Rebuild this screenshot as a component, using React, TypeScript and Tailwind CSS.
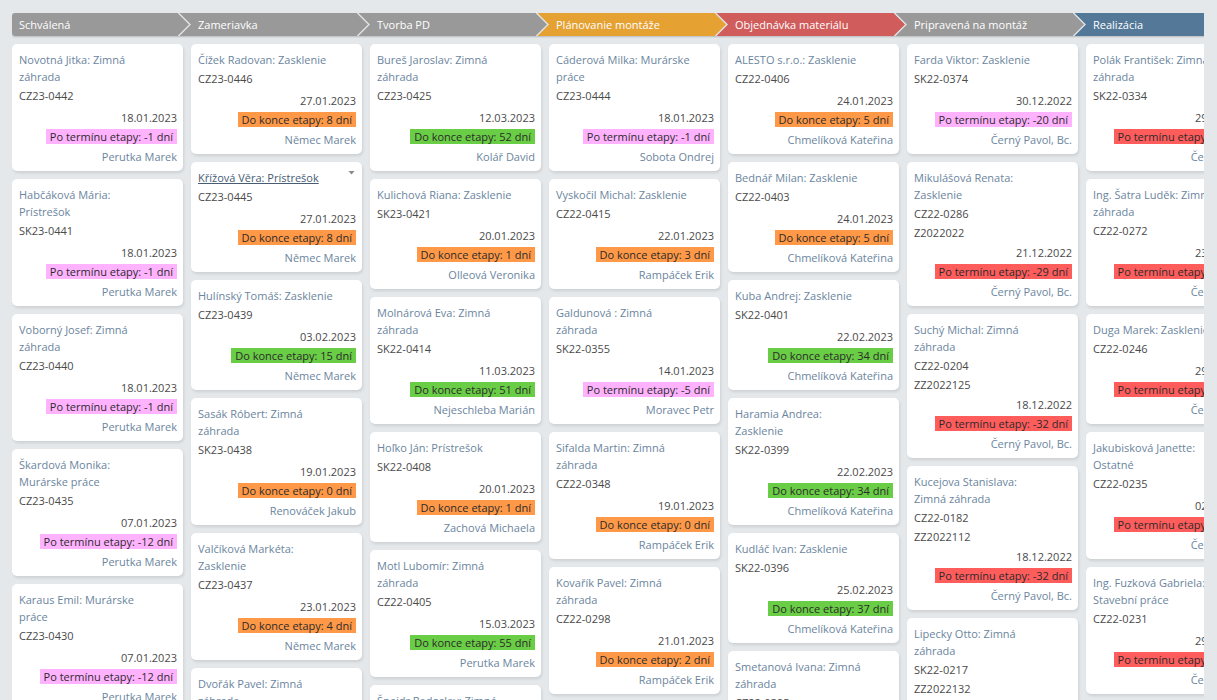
type Tone = "pink" | "orange" | "green" | "red";

interface Task {
  title: string;
  codes: string[];
  date: string;
  status: string;
  tone: Tone;
  owner: string;
  active?: boolean;
}

interface Stage {
  name: string;
  bg: string;
  fill: string;
  tasks: Task[];
}

const toneClass: Record<Tone, string> = {
  pink: "bg-[#ffb3ff]",
  orange: "bg-[#ff9947]",
  green: "bg-[#69cd45]",
  red: "bg-[#ff5c5c]",
};

const left = (days: number) => `Do konce etapy: ${days} dní`;
const late = (days: number) => `Po termínu etapy: -${days} dní`;

function task(title: string, code: string, date: string, status: string, tone: Tone, owner: string, active = false): Task {
  return { title, codes: code.split(" "), date, status, tone, owner, active };
}

const GREY = { bg: "bg-[#999999]", fill: "fill-[#999999]" };

const stages: Stage[] = [
  {
    name: "Schválená",
    ...GREY,
    tasks: [
      task("Novotná Jitka: Zimná záhrada", "CZ23-0442", "18.01.2023", late(1), "pink", "Perutka Marek"),
      task("Habčáková Mária: Prístrešok", "SK23-0441", "18.01.2023", late(1), "pink", "Perutka Marek"),
      task("Voborný Josef: Zimná záhrada", "CZ23-0440", "18.01.2023", late(1), "pink", "Perutka Marek"),
      task("Škardová Monika: Murárske práce", "CZ23-0435", "07.01.2023", late(12), "pink", "Perutka Marek"),
      task("Karaus Emil: Murárske práce", "CZ23-0430", "07.01.2023", late(12), "pink", "Perutka Marek"),
    ],
  },
  {
    name: "Zameriavka",
    ...GREY,
    tasks: [
      task("Čížek Radovan: Zasklenie", "CZ23-0446", "27.01.2023", left(8), "orange", "Němec Marek"),
      task("Křížová Věra: Prístrešok", "CZ23-0445", "27.01.2023", left(8), "orange", "Němec Marek", true),
      task("Hulínský Tomáš: Zasklenie", "CZ23-0439", "03.02.2023", left(15), "green", "Němec Marek"),
      task("Sasák Róbert: Zimná záhrada", "SK23-0438", "19.01.2023", left(0), "orange", "Renováček Jakub"),
      task("Valčíková Markéta: Zasklenie", "CZ23-0437", "23.01.2023", left(4), "orange", "Němec Marek"),
      task("Dvořák Pavel: Zimná záhrada", "CZ23-0436", "23.01.2023", left(4), "orange", "Němec Marek"),
    ],
  },
  {
    name: "Tvorba PD",
    ...GREY,
    tasks: [
      task("Bureš Jaroslav: Zimná záhrada", "CZ23-0425", "12.03.2023", left(52), "green", "Kolář David"),
      task("Kulichová Riana: Zasklenie", "SK23-0421", "20.01.2023", left(1), "orange", "Olleová Veronika"),
      task("Molnárová Eva: Zimná záhrada", "SK22-0414", "11.03.2023", left(51), "green", "Nejeschleba Marián"),
      task("Hoľko Ján: Prístrešok", "SK22-0408", "20.01.2023", left(1), "orange", "Zachová Michaela"),
      task("Motl Lubomír: Zimná záhrada", "CZ22-0405", "15.03.2023", left(55), "green", "Perutka Marek"),
      task("Šnejdr Radoslav: Zimná záhrada", "CZ22-0402", "15.03.2023", left(55), "green", "Perutka Marek"),
    ],
  },
  {
    name: "Plánovanie montáže",
    bg: "bg-[#e5a132]",
    fill: "fill-[#e5a132]",
    tasks: [
      task("Cáderová Milka: Murárske práce", "CZ23-0444", "18.01.2023", late(1), "pink", "Sobota Ondrej"),
      task("Vyskočil Michal: Zasklenie", "CZ22-0415", "22.01.2023", left(3), "orange", "Rampáček Erik"),
      task("Galdunová : Zimná záhrada", "SK22-0355", "14.01.2023", late(5), "pink", "Moravec Petr"),
      task("Sifalda Martin: Zimná záhrada", "CZ22-0348", "19.01.2023", left(0), "orange", "Rampáček Erik"),
      task("Kovařík Pavel: Zimná záhrada", "CZ22-0298", "21.01.2023", left(2), "orange", "Rampáček Erik"),
    ],
  },
  {
    name: "Objednávka materiálu",
    bg: "bg-[#d05c5c]",
    fill: "fill-[#d05c5c]",
    tasks: [
      task("ALESTO s.r.o.: Zasklenie", "CZ22-0406", "24.01.2023", left(5), "orange", "Chmelíková Kateřina"),
      task("Bednář Milan: Zasklenie", "CZ22-0403", "24.01.2023", left(5), "orange", "Chmelíková Kateřina"),
      task("Kuba Andrej: Zasklenie", "SK22-0401", "22.02.2023", left(34), "green", "Chmelíková Kateřina"),
      task("Haramia Andrea: Zasklenie", "SK22-0399", "22.02.2023", left(34), "green", "Chmelíková Kateřina"),
      task("Kudláč Ivan: Zasklenie", "SK22-0396", "25.02.2023", left(37), "green", "Chmelíková Kateřina"),
      task("Smetanová Ivana: Zimná záhrada", "CZ22-0395", "25.02.2023", left(37), "green", "Chmelíková Kateřina"),
    ],
  },
  {
    name: "Pripravená na montáž",
    ...GREY,
    tasks: [
      task("Farda Viktor: Zasklenie", "SK22-0374", "30.12.2022", late(20), "pink", "Černý Pavol, Bc."),
      task("Mikulášová Renata: Zasklenie", "CZ22-0286 Z2022022", "21.12.2022", late(29), "red", "Černý Pavol, Bc."),
      task("Suchý Michal: Zimná záhrada", "CZ22-0204 ZZ2022125", "18.12.2022", late(32), "red", "Černý Pavol, Bc."),
      task("Kucejova Stanislava: Zimná záhrada", "CZ22-0182 ZZ2022112", "18.12.2022", late(32), "red", "Černý Pavol, Bc."),
      task("Lipecky Otto: Zimná záhrada", "SK22-0217 ZZ2022132", "18.12.2022", late(32), "red", "Černý Pavol, Bc."),
    ],
  },
  {
    name: "Realizácia",
    bg: "bg-[#537898]",
    fill: "fill-[#537898]",
    tasks: [
      task("Polák František: Zimná záhrada", "SK22-0334", "29.12.2022", late(21), "red", "Černý Pavol"),
      task("Ing. Šatra Luděk: Zimná záhrada", "CZ22-0272", "23.12.2022", late(27), "red", "Černý Pavol"),
      task("Duga Marek: Zasklenie", "CZ22-0246", "29.12.2022", late(21), "red", "Černý Pavol"),
      task("Jakubisková Janette: Ostatné", "CZ22-0235", "02.12.2022", late(48), "red", "Černý Pavol"),
      task("Ing. Fuzková Gabriela: Stavební práce", "CZ22-0231", "29.12.2022", late(21), "red", "Černý Pavol"),
    ],
  },
];

function StageHeader({ stage, previous }: { stage: Stage; previous?: Stage }) {
  return (
    <div className={`flex h-[23px] shrink-0 items-center ${stage.bg} ${previous ? "w-[179px]" : "w-[166px] rounded-l-[3px]"}`}>
      {previous && (
        <svg viewBox="0 0 13 23" className="h-[23px] w-[13px] shrink-0" aria-hidden="true">
          <path d="M0 0L12 11.5L0 23Z" className={previous.fill} />
          <path d="M0 -0.5L12 11.5L0 23.5" fill="none" stroke="#e0e3e5" strokeWidth="1.4" />
        </svg>
      )}
      <h2 className="pl-[7px] whitespace-nowrap text-white">{stage.name}</h2>
    </div>
  );
}

function TaskCard({ item }: { item: Task }) {
  const titleTone = item.active ? "text-[#475d73] underline" : "text-[#6b859e]";
  return (
    <article className="relative rounded-[5px] bg-white pt-[7px] pr-[6px] pb-[6px] pl-[7px] shadow-[1px_2px_3px_rgba(0,0,0,0.1)]">
      <h3 className="pr-[22px]">
        <a href="#" className={titleTone}>{item.title}</a>
      </h3>
      {item.codes.map((code) => (
        <p key={code} className="mt-[2px]">{code}</p>
      ))}
      <div className={`flex flex-col items-end ${item.codes.length > 1 ? "mt-[3px]" : "mt-[5px]"}`}>
        <p>{item.date}</p>
        <p className={`mt-[3px] mb-1 px-1 leading-[15px] whitespace-nowrap text-[#2b2b2b] ${toneClass[item.tone]}`}>{item.status}</p>
        <a href="#" className="text-[#6b859e]">{item.owner}</a>
      </div>
      {item.active && (
        <button type="button" aria-label="Možnosti" className="absolute top-[9px] right-[7px]">
          <svg viewBox="0 0 7 4" className="h-1 w-[7px]" aria-hidden="true">
            <path d="M0.5 0H6.5L3.5 3.5Z" fill="#888" />
          </svg>
        </button>
      )}
    </article>
  );
}

export default function App() {
  return (
    <main className="h-screen overflow-hidden bg-[#e4e8eb] pt-[13px] pr-[13px] pl-3 font-['Open_Sans',sans-serif] text-[11px] leading-[17px] text-[#4a4a4a]">
      <div className="h-full overflow-hidden">
        <header className="flex w-max rounded-l-[3px] shadow-[0_1px_2px_rgba(0,0,0,0.2)]">
          {stages.map((stage, i) => (
            <StageHeader key={stage.name} stage={stage} previous={stages[i - 1]} />
          ))}
        </header>
        <div className="mt-2 flex items-start gap-2">
          {stages.map((stage) => (
            <section key={stage.name} aria-label={stage.name} className="flex w-[171px] shrink-0 flex-col gap-2">
              {stage.tasks.map((item) => (
                <TaskCard key={item.title} item={item} />
              ))}
            </section>
          ))}
        </div>
      </div>
    </main>
  );
}
